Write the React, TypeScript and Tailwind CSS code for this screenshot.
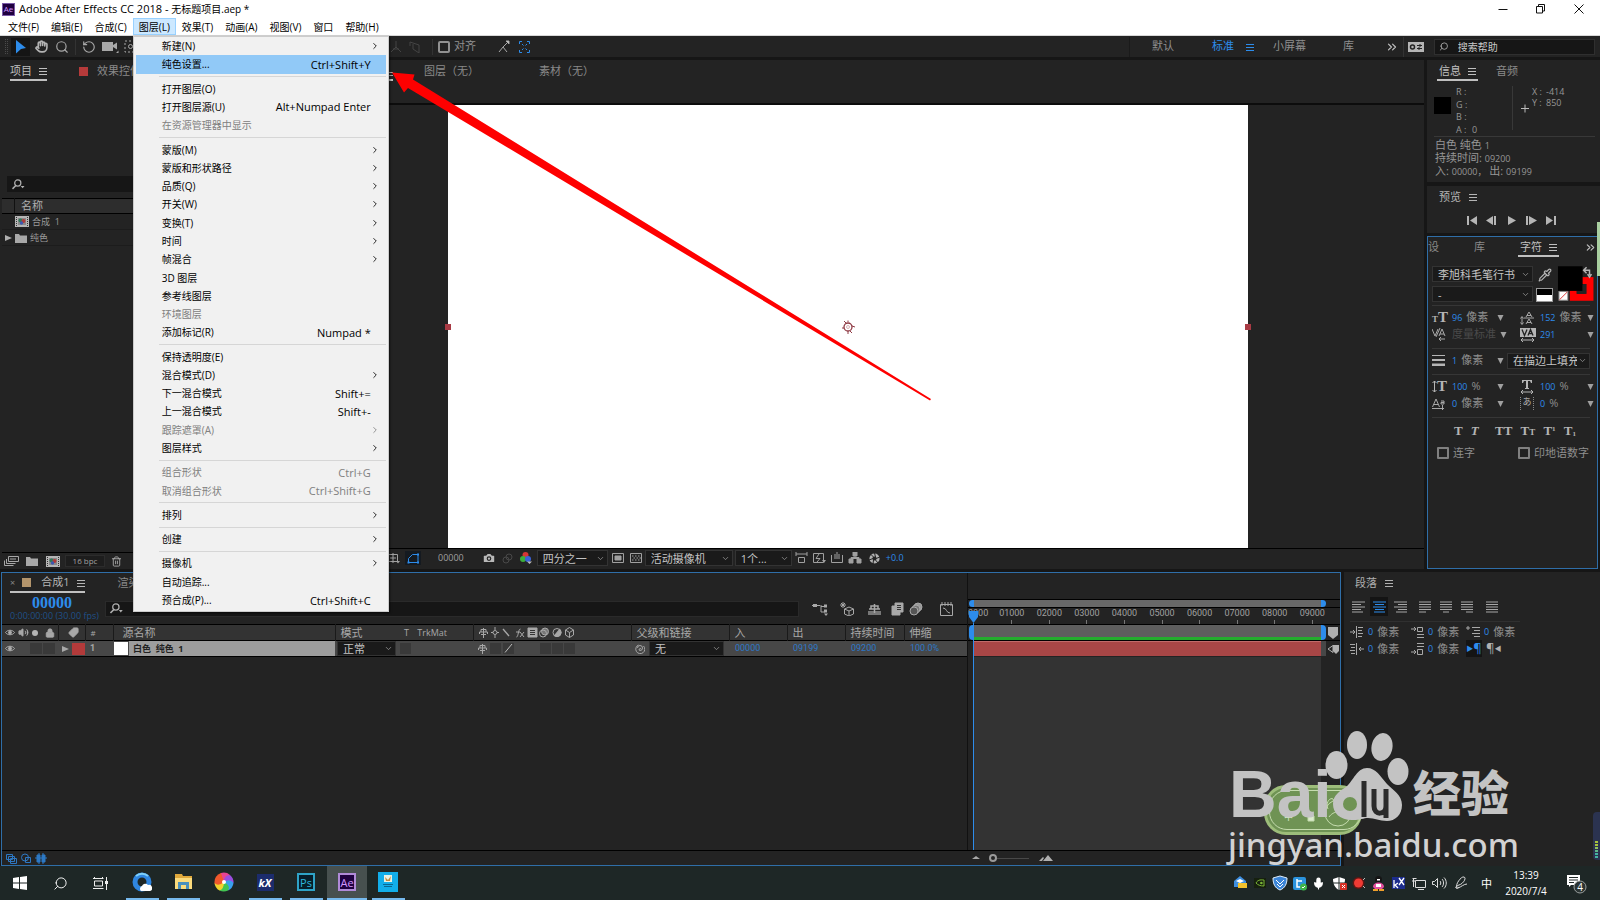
import React, { useState } from "react";
import {
  Camera,
  ChevronDown,
  ChevronRight,
  ChevronsRight,
  Hand,
  Lock,
  Mic,
  Pipette,
  RotateCcw,
  Search,
  Tag,
  Trash2,
  Volume2,
} from "lucide-react";

interface IMenuItem {
  label: string;
  keys?: string;
  sub?: boolean;
  disabled?: boolean;
}

const MENU_BAR = [
  "文件(F)",
  "编辑(E)",
  "合成(C)",
  "图层(L)",
  "效果(T)",
  "动画(A)",
  "视图(V)",
  "窗口",
  "帮助(H)",
];

const LAYER_MENU: IMenuItem[][] = [
  [
    { label: "新建(N)", sub: true },
    { label: "纯色设置...", keys: "Ctrl+Shift+Y" },
  ],
  [
    { label: "打开图层(O)" },
    { label: "打开图层源(U)", keys: "Alt+Numpad Enter" },
    { label: "在资源管理器中显示", disabled: true },
  ],
  [
    { label: "蒙版(M)", sub: true },
    { label: "蒙版和形状路径", sub: true },
    { label: "品质(Q)", sub: true },
    { label: "开关(W)", sub: true },
    { label: "变换(T)", sub: true },
    { label: "时间", sub: true },
    { label: "帧混合", sub: true },
    { label: "3D 图层" },
    { label: "参考线图层" },
    { label: "环境图层", disabled: true },
    { label: "添加标记(R)", keys: "Numpad *" },
  ],
  [
    { label: "保持透明度(E)" },
    { label: "混合模式(D)", sub: true },
    { label: "下一混合模式", keys: "Shift+=" },
    { label: "上一混合模式", keys: "Shift+-" },
    { label: "跟踪遮罩(A)", sub: true, disabled: true },
    { label: "图层样式", sub: true },
  ],
  [
    { label: "组合形状", keys: "Ctrl+G", disabled: true },
    { label: "取消组合形状", keys: "Ctrl+Shift+G", disabled: true },
  ],
  [{ label: "排列", sub: true }],
  [{ label: "创建", sub: true }],
  [
    { label: "摄像机", sub: true },
    { label: "自动追踪..." },
    { label: "预合成(P)...", keys: "Ctrl+Shift+C" },
  ],
];

const RULER = [
  "01000",
  "02000",
  "03000",
  "04000",
  "05000",
  "06000",
  "07000",
  "08000",
  "09000",
];

const Burger = ({ className = "" }: { className?: string }) => (
  <svg
    className={`shrink-0 ${className}`}
    width="8"
    height="8"
    viewBox="0 0 8 8"
    stroke="currentColor"
  >
    <path d="M0 1.5h8M0 4.5h8M0 7.5h8" />
  </svg>
);

const Caret = () => (
  <svg className="shrink-0" width="7" height="6" viewBox="0 0 7 6" fill="#a0a0a0">
    <path d="M0.5 0h6L3.5 6z" />
  </svg>
);

const Tab = ({
  label,
  active,
  className = "",
}: {
  label: string;
  active?: boolean;
  className?: string;
}) => (
  <button
    className={`flex h-[18px] items-center gap-[7px] whitespace-nowrap text-[11px] ${
      active
        ? "border-b-2 border-[#c0c0c0] text-[#c0c0c0]"
        : "border-b-2 border-transparent text-[#8a8a8a]"
    } ${className}`}
  >
    {label}
    {active ? <Burger /> : null}
  </button>
);

const Dropdown = ({
  value,
  label,
  className = "",
}: {
  value: string;
  label: string;
  className?: string;
}) => (
  <label
    className={`relative flex h-4 items-center border border-[#333] bg-[#1a1a1a] ${className}`}
  >
    <select
      aria-label={label}
      className="h-full w-full appearance-none overflow-hidden bg-transparent pl-[5px] pr-3 text-[11px] leading-none text-[#c4c4c4] outline-none"
    >
      <option>{value}</option>
    </select>
    <ChevronDown className="pointer-events-none absolute right-[2px] h-[9px] w-[9px] text-[#999]" />
  </label>
);

const TitleBar = () => (
  <div className="flex h-[18px] items-center bg-white pl-[2px] text-black">
    <div className="flex h-[13px] w-[13px] items-center justify-center border border-[#7a5aa8] bg-[#1f0040] text-[8px] leading-none text-[#cf96fd]">
      Ae
    </div>
    <span className="ml-1 flex-1 text-[11px]">
      Adobe After Effects CC 2018 -{" "}
      <span className="text-[10px]">无标题项目.aep *</span>
    </span>
    <button aria-label="最小化" className="mr-[28px]">
      <svg width="10" height="10" viewBox="0 0 10 10" stroke="#111">
        <path d="M0.5 5.5h9" />
      </svg>
    </button>
    <button aria-label="还原" className="mr-[28px]">
      <svg width="10" height="10" viewBox="0 0 10 10" stroke="#111" fill="none">
        <path d="M0.5 2.5h6v6.5h-6zM2.5 2.500V0.500h6v6.500h-2" />
      </svg>
    </button>
    <button aria-label="关闭" className="mr-4">
      <svg width="10" height="10" viewBox="0 0 10 10" stroke="#111">
        <path d="M0.500 0.500l9 9M9.500 0.500l-9 9" />
      </svg>
    </button>
  </div>
);

const LayerMenu = () => (
  <div
    role="menu"
    className="absolute left-0 top-full z-30 mt-[1px] flex h-[576px] w-[256px] flex-col border border-[#ccc] bg-[#f1f1f1] pb-[2px] text-black shadow-[1px_1px_2px_rgba(0,0,0,0.6)]"
  >
    {LAYER_MENU.map((group, index) => (
      <React.Fragment key={index}>
        {index > 0 ? (
          <div className="flex h-[6px] shrink-0 items-center">
            <div className="ml-[25px] mr-[2px] h-px flex-1 bg-[#d6d6d6]" />
          </div>
        ) : null}
        {group.map((item) => (
          <button
            key={item.label}
            role="menuitem"
            disabled={item.disabled}
            className={`mx-[2px] flex flex-1 items-center pl-[26px] pr-2 text-left text-[10px] leading-none ${
              item.label === "纯色设置..." ? "bg-[#91c9f7]" : ""
            } ${item.disabled ? "text-[#808080]" : ""}`}
          >
            <span className="flex-1">{item.label}</span>
            {item.keys ? (
              <span className="mr-[7px] text-[11px]">{item.keys}</span>
            ) : null}
            {item.sub ? (
              <ChevronRight className="-mr-[2px] h-[10px] w-[10px]" />
            ) : null}
          </button>
        ))}
      </React.Fragment>
    ))}
  </div>
);

const MenuBar = () => (
  <div className="flex h-[18px] border-b border-[#d8d8d8] bg-white pl-[2px] text-[10px] text-black">
    {MENU_BAR.map((label) => {
      const open = label === "图层(L)";
      return (
        <div key={label} className="relative flex">
          <button
            className={`h-[17px] whitespace-nowrap border px-[5px] leading-none ${
              open ? "border-[#99d1ff] bg-[#cce8ff]" : "border-transparent"
            }`}
          >
            {label}
          </button>
          {open ? <LayerMenu /> : null}
        </div>
      );
    })}
  </div>
);

const Toolbar = () => (
  <div className="flex h-[21px] items-center bg-[#232323] text-[11px] text-[#8f8f8f]">
    <div className="flex w-[388px] shrink-0 items-center pl-1">
      <svg width="5" height="16" viewBox="0 0 5 16" stroke="#4a4a4a">
        <path d="M1.500 0v16M3.500 0v16" strokeDasharray="1 1" />
      </svg>
      <button
        aria-label="选取工具"
        className="ml-[2px] flex h-[18px] w-[19px] items-center justify-center bg-[#151515]"
      >
        <svg width="11" height="14" viewBox="0 0 11 14" fill="#2d8ceb">
          <path d="M1 0l10 8-5 1-5 4.500z" />
        </svg>
      </button>
      <button aria-label="手形工具" className="ml-[5px]">
        <Hand className="h-[13px] w-[13px] text-[#b4b4b4]" strokeWidth={3} />
      </button>
      <button aria-label="缩放工具" className="ml-[7px]">
        <Search className="h-[14px] w-[14px] text-[#a8a8a8]" />
      </button>
      <div className="mx-[6px] h-4 w-px bg-[#333]" />
      <button aria-label="旋转工具">
        <RotateCcw className="h-[14px] w-[14px] text-[#a8a8a8]" />
      </button>
      <button aria-label="摄像机工具" className="ml-[6px]">
        <svg width="17" height="14" viewBox="0 0 17 14" fill="#a8a8a8">
          <path d="M0 2h11v3l4-2.500v7L11 7v4H0zM14 13l2.500-2.500V13z" />
        </svg>
      </button>
      <button aria-label="锚点工具" className="ml-[5px]">
        <svg width="13" height="13" viewBox="0 0 13 13" stroke="#a8a8a8" fill="none">
          <path d="M1 1h11v11H1z" strokeDasharray="2 2" />
          <circle cx="6.500" cy="6.500" r="2" />
        </svg>
      </button>
    </div>
    <svg
      className="ml-[2px]"
      width="34"
      height="13"
      viewBox="0 0 34 13"
      stroke="#454545"
      fill="none"
    >
      <path d="M6 1v6M6 7l-5 5M6 7l5 5M3 9h6M20 2l9 3v8l-6-4V4M20 2v4" />
    </svg>
    <div className="mx-[5px] ml-2 h-4 w-px bg-[#333]" />
    <label className="flex items-center gap-1">
      <input
        type="checkbox"
        className="h-3 w-3 appearance-none rounded-[2px] border-2 border-[#929292]"
      />
      对齐
    </label>
    <svg
      className="ml-[22px]"
      width="12"
      height="13"
      viewBox="0 0 12 13"
      stroke="#a8a8a8"
      fill="none"
    >
      <path d="M1 12l4-5 4 5M5 7l5-5" />
      <path d="M8 1h3v3z" fill="#ddd" />
    </svg>
    <svg
      className="ml-[9px]"
      width="11"
      height="12"
      viewBox="0 0 11 12"
      stroke="#2d8ceb"
      fill="none"
    >
      <path d="M0.500 3V0.500H3M8 0.500h2.500V3M10.500 9v2.500H8M3 11.500H0.500V9M3 3l1.500 1.500M8 3L6.500 4.500M3 9l1.500-1.500M8 9L6.500 7.500" />
    </svg>
    <div className="flex-1" />
    <div className="h-5 w-px bg-[#1a1a1a]" />
    <nav className="flex items-center">
      <button className="ml-[22px]">默认</button>
      <button className="ml-[38px] flex items-center gap-3 text-[#2d8ceb]">
        标准
        <Burger />
      </button>
      <button className="ml-[19px]">小屏幕</button>
      <button className="ml-[37px]">库</button>
      <button aria-label="更多" className="ml-[31px]">
        <ChevronsRight className="h-[14px] w-[14px] text-[#c0c0c0]" />
      </button>
    </nav>
    <div className="mx-1 h-5 w-px bg-[#333]" />
    <svg width="16" height="10" viewBox="0 0 16 10">
      <rect width="16" height="10" fill="#b5b5b5" />
      <circle cx="4.500" cy="5" r="2" fill="none" stroke="#222" strokeWidth="1.500" />
      <path d="M9 3.500h5M9 6.500h5M12 2v3M11 5v3" stroke="#222" />
    </svg>
    <label className="ml-[10px] mr-[5px] flex h-4 w-[161px] items-center border border-[#2f2f2f] bg-[#161616] pl-1">
      <Search className="h-[11px] w-[11px] -scale-x-100 text-[#b5b5b5]" />
      <input
        aria-label="搜索帮助"
        placeholder="搜索帮助"
        className="ml-[9px] w-full bg-transparent text-[10px] leading-none placeholder-[#c8c8c8] outline-none"
      />
    </label>
  </div>
);

const CompIcon = () => (
  <svg width="14" height="11" viewBox="0 0 14 11">
    <rect width="14" height="11" fill="#b5b5b5" />
    <path d="M1.500 1v9M12.500 1v9" stroke="#333" strokeDasharray="1 1" />
    <rect x="3" y="2" width="8" height="7" fill="#8a8a8a" />
    <circle cx="5.500" cy="4.500" r="2" fill="#2f7a5a" />
    <circle cx="8.500" cy="5" r="2" fill="#b03a3a" />
    <circle cx="6.500" cy="7" r="1.700" fill="#3f58b0" />
  </svg>
);

const FolderIcon = () => (
  <svg width="12" height="10" viewBox="0 0 12 10" fill="#a8a8a8">
    <path d="M0 1h4l1 1.500h7V10H0z" />
  </svg>
);

const SearchDrop = () => (
  <svg width="14" height="11" viewBox="0 0 14 11" stroke="#b0b0b0" fill="none">
    <circle cx="6" cy="4" r="3.200" strokeWidth="1.300" />
    <path d="M4 6.500L0.500 10" strokeWidth="1.600" />
    <path d="M9 7h4l-2 2.500z" fill="#b0b0b0" stroke="none" />
  </svg>
);

const ProjectPanel = () => (
  <section className="flex w-[388px] shrink-0 flex-col bg-[#232323] pl-[2px]">
    <div className="flex h-[116px] items-start pt-[3px]">
      <Tab label="项目" active className="ml-2" />
      <div className="ml-[32px] mt-[4px] h-[9px] w-[9px] bg-[#b53a3a]" />
      <Tab label="效果控件" className="ml-[9px]" />
    </div>
    <label className="ml-[5px] mr-3 flex h-4 items-center bg-[#161616] pl-[5px]">
      <SearchDrop />
      <input aria-label="搜索项目" className="w-full bg-transparent outline-none" />
    </label>
    <table className="mt-[6px] w-full border-t border-black text-left text-[11px]">
      <thead>
        <tr className="h-[15px] border-b border-black bg-[#2d2d2d] text-[#b0b0b0]">
          <th className="p-0 pl-3 font-normal leading-[14px]">
            <span className="border-l border-[#111] pl-[6px]">名称</span>
          </th>
        </tr>
      </thead>
      <tbody className="text-[9px] leading-[14px] text-[#9a9a9a]">
        <tr className="border-b border-[#1c1c1c]">
          <td className="p-0">
            <div className="flex h-[15px] items-center gap-[3px] pl-[13px]">
              <CompIcon />
              <span>合成&nbsp; 1</span>
            </div>
          </td>
        </tr>
        <tr className="border-b border-[#1c1c1c]">
          <td className="p-0">
            <div className="flex h-[15px] items-center gap-[3px] pl-[3px]">
              <svg width="7" height="6" viewBox="0 0 7 6" fill="#b0b0b0">
                <path d="M0 0l7 3-7 3z" />
              </svg>
              <FolderIcon />
              纯色
            </div>
          </td>
        </tr>
      </tbody>
    </table>
    <div className="flex-1" />
    <div className="mr-1 flex h-[17px] items-center border-t border-black text-[8px] text-[#a0a0a0]">
      <svg
        className="ml-[2px]"
        width="15"
        height="10"
        viewBox="0 0 15 10"
        stroke="#a8a8a8"
        fill="none"
      >
        <path d="M4.500 0.500h10v5h-10zM2.500 3v4.500h9M0.500 4.500v5h9M6 3h6" />
      </svg>
      <span className="ml-[7px]">
        <FolderIcon />
      </span>
      <span className="ml-[8px]">
        <CompIcon />
      </span>
      <button className="ml-[5px] h-3 w-10 border border-[#2c2c2c] bg-[#1d1d1d] leading-none">
        16 bpc
      </button>
      <Trash2 className="ml-[6px] h-[11px] w-[11px] text-[#a8a8a8]" />
    </div>
  </section>
);

const ViewerFooter = () => (
  <div className="flex h-[21px] items-center border-t border-black bg-[#232323] pb-[2px] text-[#a0a0a0]">
    <svg width="12" height="12" viewBox="0 0 12 12" stroke="#a0a0a0" fill="none">
      <path d="M0 2.500h9.500v7H0M5 1v10M2 6h6" />
      <path d="M8 9h4l-2 2.500z" fill="#a0a0a0" stroke="none" />
    </svg>
    <button
      aria-label="蒙版"
      className="ml-[5px] flex h-[14px] w-4 items-center justify-center bg-[#151a20]"
    >
      <svg width="13" height="11" viewBox="0 0 13 11" stroke="#2d8ceb" fill="none">
        <path d="M1.500 9.500v-4l4-4h5.500v8z" />
        <path d="M0.500 8.500h2v2h-2zM10 8.500h2v2h-2zM10 0.500h2v2h-2z" fill="#2d8ceb" stroke="none" />
      </svg>
    </button>
    <button className="ml-[17px] text-[9px]">00000</button>
    <Camera className="ml-[18px] h-[14px] w-[14px] fill-[#b8b8b8] text-[#232323]" />
    <svg
      className="ml-[6px]"
      width="11"
      height="11"
      viewBox="0 0 11 11"
      stroke="#484848"
      fill="none"
    >
      <circle cx="4" cy="7" r="3" />
      <circle cx="7" cy="4" r="3" />
    </svg>
    <svg className="ml-[7px]" width="13" height="12" viewBox="0 0 13 12">
      <circle cx="5.500" cy="3" r="3" fill="#d63636" />
      <circle cx="3" cy="7" r="3" fill="#3cae3c" />
      <circle cx="8" cy="7" r="3" fill="#3a62d8" />
      <path d="M7 9.500h5l-2.500 2.500z" fill="#bbb" />
    </svg>
    <Dropdown label="分辨率" value="四分之一" className="ml-1 w-[71px]" />
    <svg
      className="ml-[4px]"
      width="12"
      height="10"
      viewBox="0 0 12 10"
      stroke="#a0a0a0"
      fill="none"
    >
      <path d="M0.500 0.500h11v9H0.500z" />
      <path d="M3 3h6v4H3z" fill="#a0a0a0" />
    </svg>
    <svg
      className="ml-[6px]"
      width="12"
      height="10"
      viewBox="0 0 12 10"
      stroke="#a0a0a0"
      fill="none"
    >
      <path d="M0.500 0.500h11v9H0.500z" />
      <path d="M2 3h8M3.500 5h8M2 7h8" strokeDasharray="1.500 1.500" />
    </svg>
    <Dropdown label="3D 视图" value="活动摄像机" className="ml-[3px] w-[88px]" />
    <Dropdown label="视图布局" value="1个..." className="ml-[2px] w-[57px]" />
    <svg
      className="ml-[3px]"
      width="68"
      height="12"
      viewBox="0 0 68 12"
      stroke="#a0a0a0"
      fill="none"
    >
      <path d="M1 0v4M12 0v4M1 2h11M3.500 5.500h6v5h-6z" />
      <path d="M18.500 1.500h10v9h-10zM24 2l-3 4.500h4L22 10" />
      <path d="M27 8h4l-2 3z" fill="#a0a0a0" stroke="none" />
      <path d="M36.500 3v7.500h11V3M40 2v5M44 2v5M42 0v7" />
      <path
        d="M58 0h4v4h-4zM54 7h4v4h-4zM62 7h4v4h-4zM60 4v2M56 7V5.500h8V7"
        fill="#a0a0a0"
      />
    </svg>
    <svg className="ml-[6px]" width="11" height="11" viewBox="0 0 11 11" fill="none">
      <circle cx="5.500" cy="5.500" r="3.600" stroke="#b0b0b0" strokeWidth="3" />
      <path
        d="M5.500 0l1 4M11 4l-4 1.500M9 10L6.500 7M4 11l.5-4M0 7l4-1.500M2 1.500L4.500 4"
        stroke="#232323"
      />
    </svg>
    <button className="ml-[6px] text-[9px] text-[#2d8ceb]">+0.0</button>
  </div>
);

const CompositionPanel = () => (
  <section className="flex min-w-0 flex-1 flex-col bg-[#232323]">
    <div className="flex h-[45px] items-start border-b-2 border-[#0c0c0c] pt-[3px]">
      <div className="mt-[7px] h-[11px] w-[5px] overflow-hidden border-b-2 border-[#c0c0c0] text-[#aaa]">
        <Burger className="-ml-[3px] -mt-[2px]" />
      </div>
      <Tab label="图层（无）" className="ml-[31px]" />
      <Tab label="素材（无）" className="ml-[60px]" />
    </div>
    <div className="flex min-h-0 flex-1 pl-[60px] pr-[176px]">
      <div className="flex flex-1 items-center justify-between bg-white">
        <span className="-ml-[3px] h-[6px] w-[6px] bg-[#a83a44]" />
        <svg width="14" height="14" viewBox="0 0 14 14" stroke="#8f3a44" fill="none">
          <circle cx="7" cy="7" r="4" strokeWidth="1.300" />
          <path d="M3 1l2 2M11 13l-2-2M1 8h2M11 6l3 1M7 0.500v1.500M7 11v3" />
          <circle cx="7" cy="7" r="1.500" stroke="#d9b3b6" />
        </svg>
        <span className="-mr-[3px] h-[6px] w-[6px] bg-[#a83a44]" />
      </div>
    </div>
    <ViewerFooter />
  </section>
);

const InfoPanel = () => (
  <section className="h-[122px] bg-[#232323] text-[#969696]">
    <div className="flex pl-[10px] pt-[3px]">
      <Tab label="信息" active className="px-[2px]" />
      <Tab label="音频" className="ml-[18px]" />
    </div>
    <div className="ml-[7px] mr-[5px] flex h-[56px] border-b border-[#383838] pt-[5px] text-[9px] leading-[11px]">
      <div className="mt-[11px] h-[17px] w-[17px] bg-black" />
      <dl className="ml-[5px] grid w-[56px] grid-cols-[16px_1fr]">
        <dt>R :</dt>
        <dd />
        <dt>G :</dt>
        <dd />
        <dt>B :</dt>
        <dd />
        <dt>A :</dt>
        <dd>0</dd>
      </dl>
      <div className="h-[44px] w-px bg-[#383838]" />
      <svg
        className="ml-[8px] mt-[18px]"
        width="8"
        height="9"
        viewBox="0 0 8 9"
        stroke="#bbb"
      >
        <path d="M0 4.500h8M4 0.500v8" />
      </svg>
      <dl className="ml-[3px] grid h-[22px] grid-cols-[14px_1fr]">
        <dt>X :</dt>
        <dd>-414</dd>
        <dt>Y :</dt>
        <dd>850</dd>
      </dl>
    </div>
    <div className="pl-2 pt-[2px] text-[11px] leading-3">
      <p>
        白色 纯色 <span className="text-[9px]">1</span>
      </p>
      <p>
        持续时间: <span className="text-[9px]">09200</span>
      </p>
      <p>
        入: <span className="text-[9px]">00000，</span> 出:{" "}
        <span className="text-[9px]">09199</span>
      </p>
    </div>
  </section>
);

const PREVIEW_BUTTONS = [
  { label: "第一帧", path: "M1 0h2v9H1zM11 0v9L4 4.500z" },
  { label: "上一帧", path: "M7 0v9L0 4.500zM8 0h2v9H8z" },
  { label: "播放", path: "M2 0l8 4.500L2 9z" },
  { label: "下一帧", path: "M0 0h2v9H0zM3 0l8 4.500L3 9z" },
  { label: "最后一帧", path: "M0 0l7 4.500L0 9zM8 0h2v9H8z" },
];

const PreviewPanel = () => (
  <section className="mt-1 h-[47px] bg-[#232323]">
    <div className="flex items-center gap-2 pl-3 pt-[3px] text-[11px] leading-4 text-[#b5b5b5]">
      预览
      <Burger />
    </div>
    <div className="mt-[11px] flex gap-[9px] pl-[39px]">
      {PREVIEW_BUTTONS.map((item) => (
        <button key={item.label} aria-label={item.label}>
          <svg width="11" height="9" viewBox="0 0 11 9" fill="#b5b5b5">
            <path d={item.path} />
          </svg>
        </button>
      ))}
    </div>
  </section>
);

const CharField = ({
  icon,
  value,
  unit,
  dim,
  className = "",
}: {
  icon: React.ReactNode;
  value: string;
  unit?: string;
  dim?: boolean;
  className?: string;
}) => (
  <div className={`flex h-[17px] items-center text-[11px] ${className}`}>
    <span className="flex w-[20px] shrink-0 justify-start">{icon}</span>
    <button
      className={`whitespace-nowrap ${
        dim ? "text-[11px] text-[#4a4a4a]" : "text-[9px] text-[#2d8ceb]"
      }`}
    >
      {value}
    </button>
    <span className="ml-1 flex-1 whitespace-nowrap text-[#8f8f8f]">{unit}</span>
    <Caret />
  </div>
);

const serif = "font-['Liberation_Serif',serif] font-bold leading-none text-[#b5b5b5]";

const CharacterPanel = () => (
  <section className="mr-[2px] mt-[3px] flex flex-1 flex-col border border-[#2f6ea8] bg-[#232323] pr-[3px]">
    <div className="flex h-[29px] items-start pt-[2px]">
      <Tab label="设" />
      <Tab label="库" className="ml-[35px]" />
      <Tab label="字符" active className="ml-[33px] px-[2px]" />
      <ChevronsRight className="ml-auto -mr-[3px] mt-[2px] h-[13px] w-[13px] text-[#c0c0c0]" />
    </div>
    <div className="flex pl-1">
      <div className="flex w-[102px] flex-col gap-1">
        <Dropdown label="字体" value="李旭科毛笔行书" />
        <Dropdown label="字体样式" value="-" />
      </div>
      <div className="ml-[4px] flex w-4 flex-col items-center gap-[6px] pt-[2px]">
        <Pipette className="h-[14px] w-[14px] text-[#b5b5b5]" />
        <div className="h-[14px] w-[17px] border border-[#999] bg-white">
          <div className="h-[6px] bg-black" />
        </div>
      </div>
      <svg className="ml-1" width="38" height="37" viewBox="0 0 38 37">
        <rect x="16.500" y="14.500" width="17" height="17" fill="none" stroke="#f00" strokeWidth="7" />
        <rect x="1" y="0" width="25" height="25" fill="#000" />
        <path d="M20 25h6v-6h3v9h-9z" fill="#232323" />
        <rect x="2" y="25.500" width="9" height="9" fill="#fff" stroke="#888" />
        <path d="M2.500 34L10.500 26" stroke="#e04040" />
        <path d="M28 4h5v5M30 1l-3 3 3 3M31 8l2 3 2-3" stroke="#b5b5b5" strokeWidth="1.500" fill="none" />
      </svg>
    </div>
    <div className="mx-1 mt-[2px] grid grid-cols-[72px_74px] gap-x-[16px] border-t border-[#363636] pb-[5px] pt-[3px]">
      <CharField
        value="96"
        unit="像素"
        icon={
          <span className={serif}>
            <span className="text-[9px]">T</span>
            <span className="text-[15px]">T</span>
          </span>
        }
      />
      <CharField
        value="152"
        unit="像素"
        icon={
          <svg width="14" height="14" viewBox="0 0 14 14" stroke="#a8a8a8" fill="none">
            <path d="M6 6l3-5 3 5M7 4.500h4M6 13l3-5 3 5M7 11.500h4M4 7h10M2 6v7M0.500 7.500L2 5.500l1.500 2M0.500 11.500L2 13.500l1.500-2" />
          </svg>
        }
      />
      <CharField
        value="度量标准"
        dim
        icon={
          <svg width="14" height="13" viewBox="0 0 14 13" stroke="#a8a8a8" fill="none">
            <path d="M0 1l3 7 3-7M4 9l4-9M7 8l3-7 3 7M8 6h4M7 11h6M9 9l-2 2 2 2" />
          </svg>
        }
      />
      <CharField
        value="291"
        icon={
          <svg width="16" height="14" viewBox="0 0 16 14">
            <path d="M0 0h16v9H0z" fill="#b5b5b5" />
            <path d="M2 1.500l2.500 6L7 1.500M8 7.500l2.500-6 2.500 6M9 5.500h3" stroke="#222" fill="none" strokeWidth="1.300" />
            <path d="M1 12h13M3 10l-2 2 2 2M12 10l2 2-2 2" stroke="#b5b5b5" fill="none" />
          </svg>
        }
      />
    </div>
    <div className="mx-1 flex h-[26px] items-center border-t border-[#363636] pb-[2px]">
      <CharField
        className="w-[72px] shrink-0"
        value="1"
        unit="像素"
        icon={
          <svg width="13" height="11" viewBox="0 0 13 11" fill="#b5b5b5">
            <path d="M0 0h13v1H0zM0 4h13v2H0zM0 8.500h13v2.500H0z" />
          </svg>
        }
      />
      <Dropdown label="描边方式" value="在描边上填充" className="ml-[3px] w-[88px]" />
    </div>
    <div className="mx-1 grid grid-cols-[72px_74px] gap-x-[16px] border-y border-[#363636] pb-[5px] pt-[3px]">
      <CharField
        value="100"
        unit="%"
        icon={
          <span className={`flex items-center ${serif}`}>
            <svg width="5" height="13" viewBox="0 0 5 13" stroke="#b5b5b5" fill="none">
              <path d="M2.500 1v11M0.500 3l2-2 2 2M0.500 10l2 2 2-2" />
            </svg>
            <span className="text-[15px]">T</span>
          </span>
        }
      />
      <CharField
        value="100"
        unit="%"
        icon={
          <svg width="14" height="15" viewBox="0 0 14 15" fill="#b5b5b5">
            <path d="M2 1h10v3h-1L10 2H8v7h1v1H5V9h1V2H4L3 4H2z" />
            <path d="M1 13h12M3 11l-2 2 2 2M11 11l2 2-2 2" stroke="#b5b5b5" fill="none" />
          </svg>
        }
      />
      <CharField
        value="0"
        unit="像素"
        icon={
          <svg width="13" height="12" viewBox="0 0 13 12" stroke="#a8a8a8" fill="none">
            <path d="M0.500 9L4 1l3.500 8M2 6.500h4M0 10.500h12M9 3h3v3H9V4.500h3M10.500 7v5" />
          </svg>
        }
      />
      <CharField
        value="0"
        unit="%"
        icon={
          <span className="flex h-[13px] w-[14px] justify-center border-x border-dotted border-[#888] text-[9px] leading-none text-[#b5b5b5]">
            あ
          </span>
        }
      />
    </div>
    <div className={`flex h-6 items-center justify-between pl-[26px] pr-[18px] text-[13px] ${serif}`}>
      <button aria-label="仿粗体" className="font-black">T</button>
      <button aria-label="仿斜体" className="italic">T</button>
      <button aria-label="全部大写字母" className="ml-2">TT</button>
      <button aria-label="小型大写字母">
        T<span className="text-[9px]">T</span>
      </button>
      <button aria-label="上标">
        T<sup className="text-[7px]">1</sup>
      </button>
      <button aria-label="下标">
        T<sub className="text-[7px]">1</sub>
      </button>
    </div>
    <div className="flex h-[22px] items-center pl-[9px] text-[11px] text-[#8f8f8f]">
      <label className="flex w-[81px] items-center gap-[4px]">
        <input
          type="checkbox"
          className="h-3 w-3 appearance-none rounded-[1px] border-2 border-[#808080]"
        />
        连字
      </label>
      <label className="flex items-center gap-[4px] whitespace-nowrap">
        <input
          type="checkbox"
          className="h-3 w-3 appearance-none rounded-[1px] border-2 border-[#808080]"
        />
        印地语数字
      </label>
    </div>
  </section>
);

const SwitchIcons = () => (
  <svg width="98" height="11" viewBox="0 0 98 11" stroke="#a8a8a8" fill="none">
    <path d="M0.500 7V5h8v2M2 5V2.500h5V5M4.500 1v10M2 7.500h5" />
    <circle cx="16" cy="5.500" r="2" />
    <path d="M16 0v3M16 8v3M12 5.500h2M18 5.500h2" />
    <path d="M24 2l6 7" strokeWidth="1.300" />
    <path d="M37.500 10c2 0 1.500-8 4-8M37 5h4M41 5l4 5M45 5l-4 5" />
    <path d="M49 1h9v9h-9z" fill="#a8a8a8" />
    <path d="M51 3.500h5M51 5.500h5M51 7.500h5" stroke="#333" />
    <circle cx="66" cy="4.500" r="3.500" fill="#777" />
    <circle cx="64" cy="6.500" r="3.500" />
    <circle cx="78" cy="5.500" r="4" />
    <path d="M78 1.500a4 4 0 0 1 0 8z" fill="#a8a8a8" transform="rotate(40 78 5.500)" />
    <path d="M90.500 0.500l4 2.500v5l-4 2.500-4-2.500V3zM86.500 3l4 2.500 4-2.500M90.500 5.500v5" />
  </svg>
);

const Eye = () => (
  <svg width="10" height="7" viewBox="0 0 10 7" stroke="#b0b0b0" fill="none">
    <path d="M0.500 3.500C2.500 0.500 7.500 0.500 9.500 3.500C7.500 6.500 2.500 6.500 0.500 3.500z" />
    <circle cx="5" cy="3.500" r="1.500" fill="#b0b0b0" />
  </svg>
);

const th = "border-l border-[#1a1a1a] p-0 pl-[5px] text-left font-normal leading-none";
const digits = "font-['Roboto',sans-serif]";

const LayerTable = () => (
  <table className="w-full table-fixed border-y border-black text-[11px] text-[#a8a8a8]">
    <colgroup>
      <col className="w-[56px]" />
      <col className="w-[27px]" />
      <col className="w-[28px]" />
      <col />
      <col className="w-[63px]" />
      <col className="w-[75px]" />
      <col className="w-[158px]" />
      <col className="w-[98px]" />
      <col className="w-[58px]" />
      <col className="w-[58px]" />
      <col className="w-[59px]" />
      <col className="w-[63px]" />
    </colgroup>
    <thead>
      <tr className="h-4 border-b border-black bg-[#333]">
        <th className="p-0 pl-[3px]">
          <div className="flex items-center gap-[3px]">
            <Eye />
            <Volume2 className="h-[11px] w-[11px] fill-[#a8a8a8]" />
            <span className="h-[6px] w-[6px] rounded-full bg-[#b5b5b5]" />
            <Lock className="ml-1 h-[10px] w-[10px] fill-[#a8a8a8]" />
          </div>
        </th>
        <th className={th}>
          <Tag className="ml-1 h-[11px] w-[11px] -scale-x-100 fill-[#a8a8a8]" />
        </th>
        <th className={`${th} text-[8px]`}>#</th>
        <th className={th}>
          <span className="pl-1">源名称</span>
        </th>
        <th className={th}>模式</th>
        <th className="p-0 pl-[6px] text-left text-[9px] font-normal leading-none">
          T <span className="ml-[6px]">TrkMat</span>
        </th>
        <th className={th}>
          <SwitchIcons />
        </th>
        <th className={th}>父级和链接</th>
        <th className={th}>入</th>
        <th className={th}>出</th>
        <th className={th}>持续时间</th>
        <th className={th}>伸缩</th>
      </tr>
    </thead>
    <tbody>
      <tr className="h-4 bg-[#474747]">
        <td className="p-0 pl-[3px]">
          <div className="flex items-center gap-[1px]">
            <Eye />
            <span className="ml-[14px] h-[11px] w-3 bg-[#393939]" />
            <span className="h-[11px] w-3 bg-[#393939]" />
          </div>
        </td>
        <td className="p-0">
          <div className="flex items-center gap-[3px] pl-1">
            <svg width="7" height="6" viewBox="0 0 7 6" fill="#a8a8a8">
              <path d="M0 0l7 3-7 3z" />
            </svg>
            <span className="h-3 w-[13px] bg-[#b23a3a]" />
          </div>
        </td>
        <td className={`p-0 pl-[5px] text-[9px] font-bold leading-none ${digits}`}>1</td>
        <td className="p-0">
          <div className="flex h-[15px] items-center">
            <span className="mx-[1px] h-[13px] w-[14px] bg-white" />
            <span className="flex h-full flex-1 items-center bg-[#9d9d9d] pl-1 text-[9px] font-bold text-[#222]">
              白色&nbsp; 纯色&nbsp; 1
            </span>
          </div>
        </td>
        <td className="p-0">
          <Dropdown label="混合模式" value="正常" className="ml-[2px] h-[15px] w-[59px]" />
        </td>
        <td className="p-0">
          <div className="ml-[2px] h-[11px] w-[11px] bg-[#393939]" />
        </td>
        <td className="p-0 pl-[5px]">
          <div className="flex items-center gap-[1px]">
            <svg width="30" height="11" viewBox="0 0 30 11" stroke="#a8a8a8" fill="none">
              <path d="M0.500 7V5h8v2M2 5V2.500h5V5M4.500 1v10M2 7.500h5" />
              <path d="M12 0h11v11H12z" fill="#393939" stroke="none" />
            </svg>
            <svg className="-ml-[6px]" width="11" height="11" viewBox="0 0 11 11">
              <path d="M0 0h11v11H0z" fill="#393939" />
              <path d="M2 9.500L9 1" stroke="#bbb" />
            </svg>
            <span className="ml-[25px] h-[11px] w-[11px] bg-[#393939]" />
            <span className="h-[11px] w-[11px] bg-[#393939]" />
            <span className="h-[11px] w-[11px] bg-[#393939]" />
          </div>
        </td>
        <td className="p-0">
          <div className="flex items-center pl-1">
            <svg width="10" height="10" viewBox="0 0 10 10" stroke="#a8a8a8" fill="none">
              <path d="M6 5a1 1 0 1 0-1 1.500a2.500 2.500 0 1 0-2.500-2.500M8.500 2a4.500 4.500 0 1 1-5-1" />
            </svg>
            <Dropdown label="父级" value="无" className="ml-[4px] h-[15px] w-[75px]" />
          </div>
        </td>
        {["00000", "09199", "09200", "100.0%"].map((value) => (
          <td
            key={value}
            className={`p-0 pl-[6px] text-[9px] leading-none text-[#2d78c8] ${digits}`}
          >
            {value}
          </td>
        ))}
      </tr>
    </tbody>
  </table>
);

const TimelineSwitches = () => (
  <svg width="142" height="14" viewBox="0 0 142 14" stroke="#a8a8a8" fill="none">
    <path d="M0 3.500h8M9 3v7h4M9 4.500h4" />
    <path d="M1 2h4v3H1zM12 2.500h3v3h-3zM12 7.500h3v3h-3z" fill="#a8a8a8" stroke="none" />
    <path d="M12 11.500h4l-2 2.500z" fill="#a8a8a8" stroke="none" />
    <path d="M31 0v6M28 3h6M29 1l4 4M33 1l-4 4" />
    <path d="M37 5l4.500 2v5L37 14l-4.500-2V7zM32.500 7L37 9l4.500-2M37 9v5" />
    <path d="M56 9h13v4H56z" fill="#777" stroke="none" />
    <path d="M57 7h11M59 7V4h7v3M62.500 2v9" strokeWidth="1.500" />
    <path d="M80 4h8v9h-8zM83 1h8v9h-8z" fill="#a8a8a8" />
    <path d="M85 3.500h4M85 5.500h4M85 7.500h4" stroke="#333" />
    <circle cx="106" cy="5" r="4" fill="#999" />
    <circle cx="104" cy="7" r="4" fill="#777" />
    <circle cx="102" cy="9" r="4" fill="#555" />
    <path d="M128.500 2.500h12v11h-12zM130 0v4M133 0v4M136 0v4M139 0v4M131 6c4 0 3 5 7 5" />
  </svg>
);

const TimeGraph = () => (
  <div className="relative flex w-[373px] shrink-0 flex-col overflow-hidden border-l border-[#111] bg-[#232323]">
    <div className="mt-[26px] flex h-[9px] border-y border-black pl-[1px] pr-[14px]">
      <span className="w-[5px] rounded-l-full bg-[#2d8ceb]" />
      <span className="flex-1 bg-[#686868]" />
      <span className="w-[5px] rounded-r-full bg-[#2d8ceb]" />
    </div>
    <div
      className={`flex h-4 w-full shrink-0 pr-[9px] text-center text-[9px] leading-[11px] text-[#a0a0a0] ${digits}`}
    >
      <span className="w-[25px] shrink-0 text-left">0000</span>
      {RULER.map((value) => (
        <div key={value} className="flex flex-1 flex-col items-center">
          {value}
          <span className="mt-[1px] h-[4px] w-px bg-[#777]" />
        </div>
      ))}
    </div>
    <div className="flex h-4 border-t border-black pl-[1px]">
      <span className="w-[5px] rounded-l bg-[#2d8ceb]" />
      <div className="flex flex-1 flex-col">
        <div className="flex-1 bg-[#5e5e5e]" />
        <div className="h-[3px] bg-[#24ad2e]" />
      </div>
      <span className="w-[5px] rounded-r bg-[#2d8ceb]" />
      <span className="flex w-[14px] items-center justify-center">
        <svg width="10" height="12" viewBox="0 0 10 12" fill="#b0b0b0">
          <path d="M0 0h10v8l-5 4-5-4z" />
        </svg>
      </span>
    </div>
    <div className="flex h-4 border-t border-black pl-[6px]">
      <div className="flex-1 border-t border-[#c06a6a] bg-[#a84646]" />
      <div className="w-[5px] bg-[#474747]" />
      <span className="flex w-[14px] items-center justify-center">
        <svg width="12" height="10" viewBox="0 0 12 10" fill="#b0b0b0">
          <path d="M6 1h6v6l-3 3-3-3z" />
          <path d="M1 5l5-3.500v7z" fill="#232323" stroke="#b0b0b0" />
        </svg>
      </span>
    </div>
    <div className="ml-[6px] mr-[19px] mt-[1px] flex-1 bg-[#333]" />
    {/* Playhead */}
    <div className="absolute bottom-0 left-[1px] top-[38px] flex w-[9px] flex-col items-center">
      <svg className="shrink-0" width="9" height="12" viewBox="0 0 9 12">
        <path d="M0 0h9v6L4.500 12 0 6z" fill="#2d8ceb" />
      </svg>
      <div className="w-px flex-1 bg-[#2d8ceb]" />
    </div>
  </div>
);

const TimelinePanel = () => {
  const [zoom, setZoom] = useState(0);

  return (
    <section className="ml-[1px] flex min-w-0 flex-1 flex-col border border-[#2f6ea8] bg-[#232323]">
      <div className="flex min-h-0 flex-1">
        <div className="flex min-w-0 flex-1 flex-col">
          <div className="flex h-5 items-end text-[11px]">
            <button className="ml-2 flex h-[19px] items-center border-b-2 border-[#c0c0c0] text-[#b5b5b5]">
              <span className="text-[9px] text-[#888]">×</span>
              <span className="ml-[7px] h-[9px] w-[9px] bg-[#b3956c]" />
              <span className="ml-[10px] mr-2">合成1</span>
              <Burger />
            </button>
            <Tab label="渲染队列" className="ml-8" />
          </div>
          <div className="flex h-[31px] items-center">
            <div className="w-[103px] pb-[1px] pl-2 leading-none">
              <p className="ml-[22px] font-['Liberation_Serif',serif] text-[16px] font-bold leading-[15px] text-[#2d8ceb]">
                00000
              </p>
              <p className="whitespace-nowrap text-[9px] leading-[11px] text-[#1f5188]">
                0:00:00:00 (30.00 fps)
              </p>
            </div>
            <label className="flex h-4 flex-1 items-center border border-[#2a2a2a] bg-[#161616] pl-1">
              <SearchDrop />
              <input
                aria-label="搜索图层"
                className="w-full bg-transparent outline-none"
              />
            </label>
            <div className="ml-[13px] mr-[13px]">
              <TimelineSwitches />
            </div>
          </div>
          <LayerTable />
        </div>
        <TimeGraph />
      </div>
      <div className="flex h-[15px] items-center border-t border-black">
        <svg
          className="ml-1"
          width="42"
          height="11"
          viewBox="0 0 42 11"
          stroke="#2d78c4"
          fill="none"
        >
          <path d="M0.500 1.500h6v5h-6zM2.500 3.500h6v5h-6zM4.500 5.500h6v5h-6z" />
          <circle cx="19" cy="4.500" r="3.500" />
          <path d="M19.500 4.500h5v5h-5z" />
          <path d="M31 2h3v7h-3zM36 2h3v7h-3zM33 0v11M37 0v11M29 5h12" fill="#2d78c4" />
        </svg>
        <div className="flex-1" />
        <svg width="8" height="4" viewBox="0 0 8 4" fill="#a8a8a8">
          <path d="M0 3l4-3 4 3z" />
        </svg>
        <input
          type="range"
          aria-label="时间缩放"
          min={0}
          max={100}
          value={zoom}
          onChange={(e) => setZoom(Number(e.target.value))}
          className="ml-[9px] mr-[10px] h-px w-10 appearance-none bg-[#484848] [&::-webkit-slider-thumb]:h-[8px] [&::-webkit-slider-thumb]:w-[8px] [&::-webkit-slider-thumb]:appearance-none [&::-webkit-slider-thumb]:rounded-full [&::-webkit-slider-thumb]:border-2 [&::-webkit-slider-thumb]:border-[#999] [&::-webkit-slider-thumb]:bg-[#232323]"
        />
        <svg
          className="mr-[287px]"
          width="14"
          height="6"
          viewBox="0 0 14 6"
          fill="#b0b0b0"
        >
          <path d="M0 6l4-4 1 1-2 3zM4 6l5-6 5 6z" />
        </svg>
      </div>
    </section>
  );
};

const ALIGNMENTS = [
  { label: "左对齐文本", path: "M0 1h13M0 3.500h9M0 6h13M0 8.500h9M0 11h11", on: false },
  { label: "居中对齐文本", path: "M0 1h13M2 3.500h9M0 6h13M2 8.500h9M1 11h11", on: true },
  { label: "右对齐文本", path: "M0 1h13M4 3.500h9M0 6h13M4 8.500h9M2 11h11", on: false },
  { label: "最后一行左对齐", path: "M0 1h12M0 3.500h12M0 6h12M0 8.500h12M0 11h7", on: false },
  { label: "最后一行居中对齐", path: "M0 1h12M0 3.500h12M0 6h12M0 8.500h12M3 11h6", on: false },
  { label: "最后一行右对齐", path: "M0 1h12M0 3.500h12M0 6h12M0 8.500h12M5 11h7", on: false },
  { label: "两端对齐", path: "M0 1h12M0 3.500h12M0 6h12M0 8.500h12M0 11h12", on: false },
];

const IndentField = ({ path }: { path: string }) => (
  <div className="flex items-center text-[11px] text-[#8f8f8f]">
    <svg width="14" height="12" viewBox="0 0 14 12" stroke="#a8a8a8" fill="none">
      <path d={path} />
    </svg>
    <button className="ml-1 text-[9px] text-[#2d8ceb]">0</button>
    <span className="ml-1 whitespace-nowrap">像素</span>
  </div>
);

const ParagraphPanel = () => (
  <section className="ml-[3px] w-[256px] shrink-0 bg-[#232323]">
    <div className="flex items-center gap-2 pl-[11px] pt-[2px] text-[11px] leading-[18px] text-[#b0b0b0]">
      段落
      <Burger />
    </div>
    <div className="ml-[5px] mt-[5px] flex h-[19px] items-center gap-[3px]">
      {ALIGNMENTS.map((item, index) => (
        <button
          key={item.label}
          aria-label={item.label}
          className={`flex h-[19px] w-[18px] items-center justify-center ${
            item.on ? "bg-[#141414] text-[#2d8ceb]" : "text-[#a8a8a8]"
          } ${index === 3 || index === 6 ? "ml-1" : ""}`}
        >
          <svg width="13" height="12" viewBox="0 0 13 12" stroke="currentColor">
            <path d={item.path} />
          </svg>
        </button>
      ))}
    </div>
    <div className="ml-[6px] mt-[5px] grid w-[170px] grid-cols-[60px_56px_54px] border-t border-[#303030] pt-[2px] leading-4">
      <IndentField path="M0 6h5M3 4l2 2-2 2M6.500 0v12M8 1.500h5M8 4.500h4M8 7.500h5M8 10.500h4" />
      <IndentField path="M1 3h5M4 1l2 2-2 2M7.500 1.500h5v4h-5zM7 8.500h7M7 11.500h7" />
      <IndentField path="M0 2h4M2 0v4M6 1.500h8M8 4.500h6M6 7.500h8M8 10.500h6" />
      <IndentField path="M0 1.500h5M1 4.500h4M0 7.500h5M1 10.500h4M6.500 0v12M14 6H9M11 4L9 6l2 2" />
      <IndentField path="M1 9h5M4 7l2 2-2 2M7 0.500h7M7 3.500h7M7.500 6.500h5v5h-5z" />
      <div className="flex items-center gap-[4px] text-[13px] leading-none text-[#b0b0b0]">
        <button
          aria-label="从左到右"
          className="flex h-[17px] w-4 items-center justify-center bg-[#141414] text-[#2d8ceb]"
        >
          <span className="text-[7px]">▶</span>¶
        </button>
        <button aria-label="从右到左" className="flex items-center">
          ¶<span className="text-[7px]">◀</span>
        </button>
      </div>
    </div>
  </section>
);

const TASKS: { label: string; running?: boolean; icon: React.ReactNode }[] = [
  {
    label: "QQ浏览器",
    running: true,
    icon: (
      <svg width="20" height="20" viewBox="0 0 20 20">
        <circle cx="10" cy="10" r="7" fill="none" stroke="#2f86e0" strokeWidth="5" />
        <path d="M4 4a9 9 0 0 1 12 0" stroke="#7fd0f8" strokeWidth="2" fill="none" />
        <path d="M9 19a3 3 0 0 1 1-5 3.500 3.500 0 0 1 6-1 3 3 0 0 1 2 6z" fill="#fff" />
      </svg>
    ),
  },
  {
    label: "文件资源管理器",
    running: true,
    icon: (
      <svg width="19" height="16" viewBox="0 0 19 16">
        <path d="M1 0h7l1 2h9v13H1z" fill="#e0a93c" />
        <path d="M1 4h17v11H1z" fill="#fbdb7c" />
        <path d="M4 15V8h11v7h-3v-4H7v4z" fill="#4a90bd" />
      </svg>
    ),
  },
  {
    label: "360极速浏览器",
    icon: (
      <svg width="20" height="20" viewBox="0 0 20 20">
        <path d="M10 10Q4 6 7 1a9.500 9.500 0 0 1 9 2z" fill="#e84393" />
        <path d="M10 10Q10 3 16 3a9.500 9.500 0 0 1 3.500 8z" fill="#9b4de0" />
        <path d="M10 10Q16 6 19.500 11a9.500 9.500 0 0 1-5.500 7.500z" fill="#3aa0ee" />
        <path d="M10 10Q17 14 14 18.500a9.500 9.500 0 0 1-8.500 0z" fill="#43c652" />
        <path d="M10 10Q10 17 5.500 18.500A9.500 9.500 0 0 1 0.500 11z" fill="#f2d32e" />
        <path d="M10 10Q4 15 0.500 11A9.500 9.500 0 0 1 7 1z" fill="#f0582c" />
        <circle cx="10" cy="10" r="2" fill="#fff" />
      </svg>
    ),
  },
  {
    label: "kX",
    running: true,
    icon: (
      <div className="flex h-[17px] w-[17px] items-center justify-center bg-[#1c2c6c] text-[11px] font-bold italic leading-none text-white">
        kX
      </div>
    ),
  },
  {
    label: "Photoshop",
    running: true,
    icon: (
      <div className="flex h-[18px] w-[18px] items-center justify-center border-2 border-[#2fa3c7] bg-[#061e2b] text-[11px] leading-none text-[#2fb6dc]">
        Ps
      </div>
    ),
  },
  {
    label: "After Effects",
    running: true,
    icon: (
      <div className="flex h-[18px] w-[18px] items-center justify-center border-2 border-[#b08ad8] bg-[#1f0040] text-[11px] leading-none text-[#cf96fd]">
        Ae
      </div>
    ),
  },
  {
    label: "图片查看",
    running: true,
    icon: (
      <svg width="20" height="20" viewBox="0 0 20 20">
        <path d="M0 0h20v20H0z" fill="#12aeea" />
        <path d="M6 3h8v7H6z" fill="#e9f1e4" />
        <path d="M7 5l3 3 3-4-1 5H8z" fill="#c48a3a" />
        <path d="M5 12.500h10M6 14.500h8" stroke="#0b6790" />
      </svg>
    ),
  },
];

const Tray = () => (
  <svg width="238" height="16" viewBox="0 0 238 16">
    <path d="M1 6l6-5 6 5v6H1z" fill="#3e8ee0" />
    <path d="M3 6l4-2 4 2-4 2z" fill="#fff" />
    <path d="M5 8h9v5H5z" fill="#f3c22d" />
    <path d="M21 3h12v10H21z" fill="#16200f" />
    <path d="M23 8c2-4 6-3 8-3v6c-4 0-6-1-8-3zM27 8h2" fill="none" stroke="#7ab536" />
    <circle cx="28.500" cy="8" r="1.200" fill="#7ab536" />
    <path d="M47 1l7 2c0 6-2 10-7 12-5-2-7-6-7-12z" fill="#3c85d8" stroke="#dfeefc" />
    <path d="M43 5l4 4 4-4M44 9l3 3 3-3" stroke="#fff" fill="none" />
    <rect x="60" y="2" width="13" height="13" rx="2" fill="#2b93dd" />
    <path d="M64 4v8h6M64 6h5" stroke="#fff" strokeWidth="1.500" fill="none" />
    <circle cx="70.500" cy="12" r="3.500" fill="#3fb54a" />
    <path d="M69 12l1 1 2-2" stroke="#fff" fill="none" />
    <g transform="translate(6 0)">
      <path d="M100 2l6 2c0 5-2 9-6 11-4-2-6-6-6-11z" fill="#fff" />
      <path d="M100 2v13M94 8h12" stroke="#1e2827" />
      <rect x="101" y="8" width="7" height="7" rx="1" fill="#d93025" />
      <path d="M103 10l3 3M106 10l-3 3" stroke="#fff" />
      <circle cx="119.500" cy="8" r="6" fill="#5c1714" />
      <circle cx="119.500" cy="8" r="4.500" fill="#ee3b34" />
      <path d="M126 3l-2 2M126 13l-2-2" stroke="#bbb" />
      <circle cx="139.500" cy="4.500" r="3.500" fill="#151515" />
      <path d="M134 12c0-6 11-6 11 0l-2 2h-7z" fill="#e24f9f" />
      <path d="M138 4h3v1.500h-3zM137 9h5v3h-5z" fill="#fff" />
      <path d="M134 14h5v2h-5zM140 14h5v2h-5z" fill="#f0a02c" />
      <path d="M153 2h13v12h-13z" fill="#1c2c8c" />
      <path d="M155 5v8M159 8l-3 2 3 3M160 3l5 7M165 3l-5 7" stroke="#fff" fill="none" strokeWidth="1.300" />
      <path d="M173.500 3.500h4M176.500 5.500h10v7h-10zM174.500 3v9M179 14.500h6M173 6h3" stroke="#ddd" fill="none" />
      <path d="M193.500 6.500h2l3-3v9l-3-3h-2zM201 6c1 1 1 3 0 4M203 4c2 2 2 6 0 8M205 2.500c3 3 3 8 0 11" stroke="#ddd" fill="none" />
      <path d="M218 12c-2-2 4-11 7-10s-1 7-5 8-4 4-1 3 6-4 9-4M217 12c0 2 2 1 3 0" stroke="#ddd" fill="none" />
    </g>
  </svg>
);

const Taskbar = () => (
  <footer className="flex h-[34px] items-stretch bg-[#1e2726] text-white">
    <button aria-label="开始" className="flex w-10 items-center justify-center">
      <svg width="14" height="14" viewBox="0 0 14 14" fill="#fff">
        <path d="M0 2l6-1v5.500H0zM7 1l7-1v6.500H7zM0 7.500h6V13l-6-1zM7 7.500h7V14l-7-1z" />
      </svg>
    </button>
    <button aria-label="搜索" className="flex w-10 items-center justify-center">
      <Search className="h-[15px] w-[15px] -scale-x-100" strokeWidth={1.5} />
    </button>
    <button aria-label="任务视图" className="mr-px flex w-10 items-center justify-center">
      <svg width="15" height="13" viewBox="0 0 15 13" stroke="#eee" fill="none">
        <path d="M0 1.500h10.500M0 11.500h10.500M1.500 4h8v5h-8zM13.500 0v13M1.500 0v1M9.500 0v1" />
        <path d="M12 4h3v3h-3z" fill="#eee" stroke="none" />
      </svg>
    </button>
    {TASKS.map((task) => (
      <button
        key={task.label}
        aria-label={task.label}
        className={`ml-px flex w-10 flex-col items-center ${
          task.label === "After Effects" ? "bg-[#47504f]" : ""
        }`}
      >
        <span className="flex flex-1 items-center">{task.icon}</span>
        {task.running ? (
          <span
            className={`h-[2px] bg-[#76b9ed] ${
              task.label === "After Effects" ? "w-full" : "w-[33px]"
            }`}
          />
        ) : (
          <span className="h-[2px]" />
        )}
      </button>
    ))}
    <div className="flex-1" />
    <div className="relative flex items-center">
      <Tray />
      <Mic className="absolute left-[79px] h-[15px] w-[13px] fill-white" />
    </div>
    <button className="ml-[10px] self-center text-[11px] leading-none">中</button>
    <div className="ml-3 flex w-[44px] flex-col items-center justify-center text-[10px] leading-4">
      <span>13:39</span>
      <span>2020/7/4</span>
    </div>
    <button aria-label="通知" className="ml-[18px] mr-[13px] self-center">
      <svg width="21" height="22" viewBox="0 0 21 22">
        <path d="M1 3h13v10H5l-2 2v-2H1z" fill="#fff" />
        <path d="M3 5.500h9M3 8h9M3 10.500h5" stroke="#1e2726" />
        <circle cx="14" cy="15" r="6" fill="#2b3433" stroke="#9a9f9e" />
        <text x="14" y="18.500" fontSize="10" fill="#fff" textAnchor="middle">
          4
        </text>
      </svg>
    </button>
  </footer>
);

const Watermark = () => (
  <div className="pointer-events-none absolute bottom-[37px] right-[86px] z-20 w-[286px] text-[#c3c3c3]">
    {/* input method bubble */}
    <div className="absolute left-[36px] top-[52px] flex h-[50px] w-[98px] rounded-[22px] border-[3px] border-[#9dbd7a] bg-[#6f9354] p-[2px]">
      <div className="flex flex-1 items-end gap-[8px] rounded-[18px] border border-[#c5dcae] pb-[6px] pl-[14px] text-[9px] leading-[12px] text-[#dcebcf]">
        中
        <svg
          className="-mb-[4px]"
          width="60"
          height="34"
          viewBox="0 0 60 34"
          fill="none"
          stroke="#c5dcae"
        >
          <path d="M7 23l3-2 3 2v5H7z" fill="#dcebcf" />
          <circle cx="37" cy="20" r="13" />
          <path d="M27 16c-3-6 2-12 5-10l4 8M28 24c4-6 14-8 18 0" />
        </svg>
      </div>
    </div>
    <div className="relative flex h-[92px] items-end">
      <span className="pl-px font-['Liberation_Sans',Arial,sans-serif] text-[66px] font-bold leading-[62px]">
        Bai
      </span>
      <svg
        className="absolute bottom-[2px] left-[96px]"
        width="86"
        height="92"
        viewBox="0 0 86 92"
        fill="#c3c3c3"
      >
        <ellipse cx="12.500" cy="34" rx="11" ry="14" />
        <ellipse cx="33" cy="14" rx="10" ry="14" />
        <ellipse cx="58" cy="16" rx="10.500" ry="14" transform="rotate(10 58 16)" />
        <ellipse cx="74" cy="40.500" rx="10.500" ry="13.500" />
        <path d="M43 37c9 0 13 8 20 16 6 6 15 11 15 21 0 10-7 16-15 16-8 0-12-3-19-3-5 0-6 2-16 2C16 89 9 82 9 73c0-9 7-13 13-17 8-7 11-19 21-19z" />
        <circle cx="26" cy="73" r="7" fill="#6f9354" />
        <path
          d="M40 50v36M50 58v17c0 10 12 9 12 0M62 58v29"
          fill="none"
          stroke="#2b2b2b"
          strokeWidth="5"
        />
      </svg>
      <span className="absolute right-[5px] top-[36px] text-[48px] font-black leading-[48px]">
        经验
      </span>
    </div>
    <p className="relative mt-[2px] font-['Noto_Sans',sans-serif] text-[33px] font-medium leading-[36px] text-[#d2d2d2]">
      jingyan.baidu.com
    </p>
  </div>
);

const App = () => (
  <div className="relative flex h-screen flex-col overflow-hidden bg-[#161616] font-['Open_Sans','Noto_Sans_CJK_SC',sans-serif]">
    <TitleBar />
    <MenuBar />
    <Toolbar />
    <main className="mt-[3px] flex min-h-0 flex-1">
      <ProjectPanel />
      <CompositionPanel />
      <div className="ml-[3px] flex w-[173px] shrink-0 flex-col">
        <InfoPanel />
        <PreviewPanel />
        <CharacterPanel />
      </div>
    </main>
    <div className="mt-[3px] flex h-[294px] shrink-0">
      <TimelinePanel />
      <ParagraphPanel />
    </div>
    <Taskbar />
    <Watermark />

    {/* Arrow pointing at the highlighted command */}
    <svg
      className="pointer-events-none absolute left-[392px] top-[72px] z-40"
      width="540"
      height="330"
      viewBox="0 0 540 330"
      fill="#fe0000"
    >
      <path d="M0 0.500L22.500 2.500 21 7.500 539 327 538 328.500 16 16 12 20.500z" />
    </svg>

    {/* Desktop widgets docked to the right edge */}
    <div className="absolute right-0 top-[222px] z-40 h-[54px] w-[3px] bg-[#a9cfa0]" />
    <div className="absolute right-0 top-[812px] z-40 flex h-[48px] w-[7px] flex-col justify-end gap-[1px] rounded-l bg-[#2b3350] p-[2px]">
      <span className="h-[2px] bg-[#a8c23c]" />
      <span className="h-[2px] bg-[#a8c23c]" />
      <span className="h-[2px] bg-[#8fc25c]" />
      <span className="h-[2px] bg-[#5fb98a]" />
      <span className="h-[2px] bg-[#43b3a3]" />
      <span className="h-[2px] bg-[#43b3a3]" />
    </div>
  </div>
);

export default App;
